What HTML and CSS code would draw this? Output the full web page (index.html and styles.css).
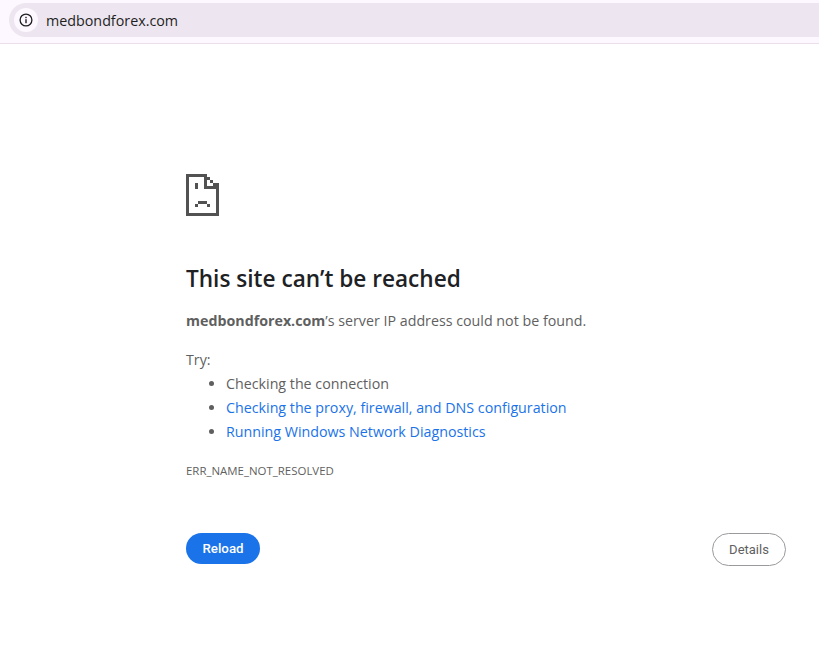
FILE: index.html
```html
<!DOCTYPE html>
<html lang="en">
<head>
    <meta charset="UTF-8">
    <title>medbondforex.com</title>
    <link rel="stylesheet" href="styles.css">
</head>
<body>
    <div class="toolbar">
        <div class="omnibox">
            <span class="site-info">
                <svg width="14" height="14" viewBox="0 0 14 14">
                    <circle cx="7" cy="7" r="5.9" fill="none" stroke="#1f1f1f" stroke-width="1.3"/>
                    <rect x="6.3" y="6.2" width="1.4" height="4" fill="#1f1f1f"/>
                    <rect x="6.3" y="3.8" width="1.4" height="1.4" fill="#1f1f1f"/>
                </svg>
            </span>
            <span class="url">medbondforex.com</span>
        </div>
    </div>
    <div class="content">
        <svg class="sad-page" width="33" height="42" viewBox="0 0 33 42" shape-rendering="crispEdges">
            <path fill="#525252" d="M0 0H21V3H3V39H30V12H33V42H0Z"/>
            <path fill="#525252" d="M18 3H21V12H30V15H18Z"/>
            <path fill="#525252" d="M21 3H24V6H21ZM24 6H27V9H24ZM27 9H33V12H27Z"/>
            <path fill="#525252" d="M9 9H12V15H9ZM9 30H12V33H9ZM12 27H21V30H12ZM21 30H24V33H21Z"/>
        </svg>
        <h1>This site can’t be reached</h1>
        <p class="summary"><strong>medbondforex.com</strong>’s server IP address could not be found.</p>
        <p class="try">Try:</p>
        <ul>
            <li>Checking the connection</li>
            <li><a href="#">Checking the proxy, firewall, and DNS configuration</a></li>
            <li><a href="#">Running Windows Network Diagnostics</a></li>
        </ul>
        <div class="error-code">ERR_NAME_NOT_RESOLVED</div>
        <div class="buttons">
            <button class="reload">Reload</button>
            <button class="details">Details</button>
        </div>
    </div>
</body>
</html>
```
FILE: styles.css
```css
html, body {
    margin: 0;
    height: 100%;
    overflow: hidden;
}
body {
    background-color: white;
    font-family: "Open Sans", "Noto Sans", sans-serif;
    color: #5f5f5f;
}
.toolbar {
    height: 44px;
    box-sizing: border-box;
    padding-top: 3px;
    background-color: #fdf7ff;
    border-bottom: 1px solid #ecdfec;
}
.omnibox {
    display: flex;
    align-items: center;
    height: 34px;
    margin-left: 9px;
    padding-left: 5px;
    background-color: #ede6f0;
    border-radius: 17px 0 0 17px;
}
.site-info {
    display: flex;
    align-items: center;
    justify-content: center;
    width: 24px;
    height: 24px;
    border-radius: 50%;
    background-color: #fdf7ff;
}
.url {
    margin-left: 8px;
    font-size: 14.3px;
    color: #1f1f1f;
}
.content {
    padding: 130px 33px 0 186px;
}
.sad-page {
    display: block;
}
h1 {
    margin: 46px 0 0;
    font-size: 22.6px;
    line-height: 34px;
    font-weight: 600;
    color: #202124;
}
p {
    margin: 0;
    font-size: 14.25px;
    line-height: 24px;
}
.summary {
    margin-top: 13px;
}
.summary strong {
    font-weight: 700;
}
.try {
    margin-top: 15px;
}
ul {
    margin: 0;
    padding-left: 40px;
    font-size: 14.25px;
    line-height: 24px;
}
a {
    color: #1a73e8;
    text-decoration: none;
}
.error-code {
    margin-top: 20px;
    font-size: 11.45px;
    line-height: 14px;
    color: #5f5f5f;
}
.buttons {
    display: flex;
    justify-content: space-between;
    align-items: flex-start;
    margin-top: 55px;
}
button {
    font-family: Roboto, sans-serif;
    font-size: 13px;
    cursor: pointer;
}
.reload {
    width: 74px;
    height: 31px;
    background-color: #1a73e8;
    color: white;
    border: none;
    border-radius: 16px;
    font-size: 13.3px;
    font-weight: 500;
}
.details {
    width: 74px;
    height: 33px;
    background-color: white;
    color: #5f5f5f;
    border: 1px solid #9a9a9e;
    border-radius: 17px;
}
```
